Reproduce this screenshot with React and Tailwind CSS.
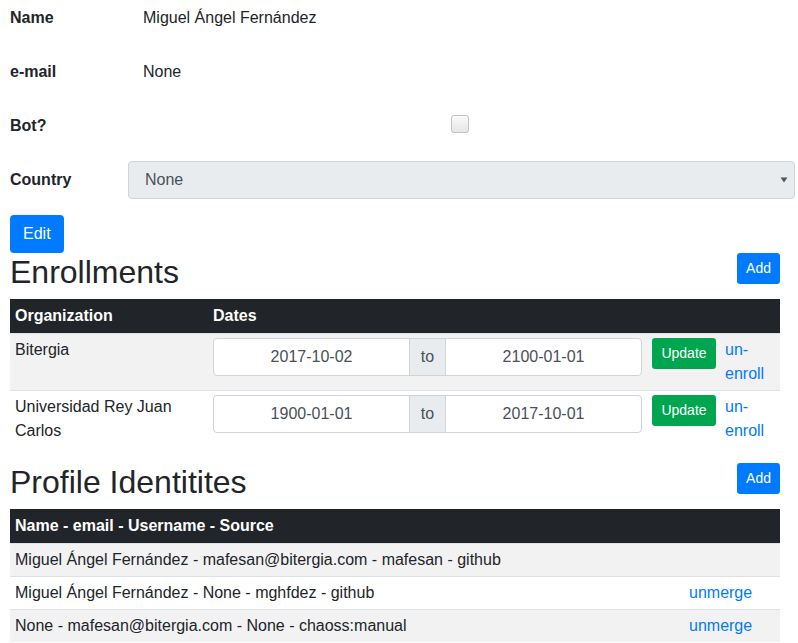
import React from "react";

function FormRow({ label, children, first }) {
  return (
    <div className={`flex h-[38px] mb-[16px] ${first ? "mt-[-1px]" : ""}`}>
      <div className="w-[118px] pt-[7px] font-bold leading-[24px]">{label}</div>
      <div className="flex-1 relative">{children}</div>
    </div>
  );
}

function BlueBtnSm({ children }) {
  return (
    <button className="h-[31px] px-[9px] text-[14px] leading-[21px] rounded-[3.2px] bg-[#007bff] text-white">
      {children}
    </button>
  );
}

function DateGroup({ from, to }) {
  return (
    <div className="flex h-[38px] w-full border border-[#ced4da] rounded-[4px] bg-white text-[#495057] overflow-hidden">
      <div className="flex-1 flex items-center justify-center">{from}</div>
      <div className="w-[37px] flex items-center justify-center bg-[#e9ecef] border-x border-[#ced4da]">to</div>
      <div className="flex-1 flex items-center justify-center">{to}</div>
    </div>
  );
}

function EnrollRow({ org, from, to, striped }) {
  return (
    <div className={`grid grid-cols-[198px_439px_73px_60px] border-t border-[#dee2e6] ${striped ? "bg-[#f2f2f2]" : "bg-white"}`}>
      <div className="px-[5px] py-[4px]">{org}</div>
      <div className="px-[5px] py-[4px]">
        <DateGroup from={from} to={to} />
      </div>
      <div className="px-[5px] py-[4px]">
        <button className="h-[31px] w-[64px] text-[14px] leading-[21px] rounded-[3.2px] bg-[#00a54f] text-white">
          Update
        </button>
      </div>
      <div className="px-[5px] py-[4px] text-[#007bff] leading-[24px]">
        <div>un-</div>
        <div>enroll</div>
      </div>
    </div>
  );
}

function IdRow({ text, striped, unmerge }) {
  return (
    <div className={`grid grid-cols-[674px_96px] border-t border-[#dee2e6] ${striped ? "bg-[#f2f2f2]" : "bg-white"}`}>
      <div className="px-[5px] py-[4px] leading-[24px] whitespace-nowrap">{text}</div>
      <div className="px-[5px] py-[4px] leading-[24px] text-[#007bff]">{unmerge ? "unmerge" : ""}</div>
    </div>
  );
}

export default function App() {
  return (
    <div className="w-[798px] h-[643px] overflow-hidden bg-white text-[#212529] text-[16px] leading-[24px] font-['Liberation_Sans',Arial,sans-serif]">
      <div className="pl-[10px] pr-[3px]">
        <FormRow label="Name" first>
          <div className="pt-[7px] pl-[15px]">Miguel Ángel Fernández</div>
        </FormRow>
        <FormRow label="e-mail">
          <div className="pt-[7px] pl-[15px]">None</div>
        </FormRow>
        <FormRow label="Bot?">
          <div className="ml-[323px] mt-[8px] w-[18px] h-[18px] rounded-[3px] border border-[#c4c4c4] bg-gradient-to-b from-[#fafafa] to-[#e6e6e6]"></div>
        </FormRow>
        <FormRow label="Country">
          <div className="h-[38px] w-full border border-[#ced4da] rounded-[4px] bg-[#e9ecef] text-[#495057] flex items-center pl-[16px] pr-[6px] justify-between">
            <span>None</span>
            <svg width="8" height="6" viewBox="0 0 8 6">
              <path d="M0.5 0.5 L7.5 0.5 L4 5.5 Z" fill="#555" />
            </svg>
          </div>
        </FormRow>
        <button className="h-[38px] px-[13px] rounded-[4px] bg-[#007bff] text-white leading-[24px]">
          Edit
        </button>
      </div>

      <div className="ml-[10px] w-[770px]">
        <div className="flex justify-between items-start mb-[8px]">
          <h2 className="text-[32px] leading-[38px] font-medium">Enrollments</h2>
          <BlueBtnSm>Add</BlueBtnSm>
        </div>
        <div className="mb-[16px]">
          <div className="grid grid-cols-[198px_439px_73px_60px] h-[34px] bg-[#212529] text-white font-bold">
            <div className="px-[5px] py-[5px]">Organization</div>
            <div className="px-[5px] py-[5px]">Dates</div>
            <div></div>
            <div></div>
          </div>
          <EnrollRow org="Bitergia" from="2017-10-02" to="2100-01-01" striped />
          <EnrollRow org={<>Universidad Rey Juan<br />Carlos</>} from="1900-01-01" to="2017-10-01" />
        </div>

        <div className="flex justify-between items-start mb-[8px]">
          <h2 className="text-[32px] leading-[38px] font-medium">Profile Identitites</h2>
          <BlueBtnSm>Add</BlueBtnSm>
        </div>
        <div>
          <div className="h-[34px] bg-[#212529] text-white font-bold px-[5px] py-[5px]">
            Name - email - Username - Source
          </div>
          <IdRow text="Miguel Ángel Fernández - mafesan@bitergia.com - mafesan - github" striped />
          <IdRow text="Miguel Ángel Fernández - None - mghfdez - github" unmerge />
          <IdRow text="None - mafesan@bitergia.com - None - chaoss:manual" striped unmerge />
        </div>
      </div>
    </div>
  );
}
